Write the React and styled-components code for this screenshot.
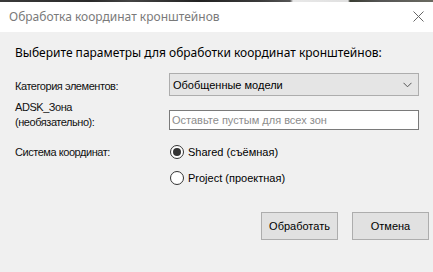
import React from "react";
import styled, { createGlobalStyle } from "styled-components";

const Global = createGlobalStyle`
  html, body { margin: 0; padding: 0; background: #f0f0f0; }
  body { width: 433px; height: 272px; overflow: hidden; }
  * { box-sizing: border-box; }
`;

const Window = styled.div`
  width: 433px;
  height: 272px;
  display: flex;
  flex-direction: column;
  background: #f0f0f0;
`;

const DesktopStrip = styled.div`
  height: 2px;
  flex: none;
  background: linear-gradient(
    to right,
    #3a3a3a 0px, #2a2a2a 90px, #444 130px, #222 200px, #3b3b3b 260px,
    #555 290px, #e8e8e8 293px, #e0e0e0 348px, #3a3d33 350px, #555 380px, #6a6a60 433px
  );
`;

const TitleBar = styled.div`
  height: 30px;
  flex: none;
  background: #ffffff;
  display: flex;
  align-items: center;
  justify-content: space-between;
  padding: 0 0 2px 9px;
`;

const TitleText = styled.span`
  font-family: "Noto Sans", sans-serif;
  font-size: 12px;
  color: #7a7a7a;
`;

const CloseButton = styled.div`
  width: 30px;
  height: 30px;
  display: flex;
  align-items: center;
  justify-content: center;
`;

const Body = styled.div`
  flex: 1;
  padding: 13px 0 0 15px;
  font-family: "Liberation Sans", Arial, sans-serif;
  font-size: 11px;
  color: #000;
`;

const Heading = styled.div`
  font-family: "Noto Sans", sans-serif;
  font-size: 12px;
  line-height: 16px;
  height: 16px;
`;

const Row = styled.div`
  display: flex;
  align-items: ${(p) => p.$align || "center"};
  margin-top: ${(p) => p.$top}px;
`;

const Label = styled.div`
  width: 154px;
  flex: none;
  letter-spacing: -0.45px;
  color: #111;
  line-height: ${(p) => p.$lh || 14}px;
  padding-top: ${(p) => p.$pt || 0}px;
`;

const Combo = styled.div`
  width: 250px;
  height: 23px;
  background: #e5e5e5;
  border: 1px solid #adadad;
  display: flex;
  align-items: center;
  justify-content: space-between;
  padding: 1px 6px 0 3px;
`;

const TextBox = styled.div`
  width: 250px;
  height: 20px;
  background: #fff;
  border: 1px solid #7a7a7a;
  display: flex;
  align-items: center;
  padding: 0 2px;
  margin-top: ${(p) => p.$top || 0}px;
  color: #8c8c8c;
`;

const RadioGroup = styled.div`
  display: flex;
  flex-direction: column;
  gap: 10px;
`;

const RadioItem = styled.div`
  display: flex;
  align-items: center;
  height: 16px;
  gap: 4px;
`;

const RadioCircle = styled.span`
  width: 14px;
  height: 14px;
  border-radius: 50%;
  border: 1px solid #333;
  background: #fff;
  display: flex;
  align-items: center;
  justify-content: center;
  margin-left: 1px;
  &::after {
    content: "";
    display: ${(p) => (p.$checked ? "block" : "none")};
    width: 8px;
    height: 8px;
    border-radius: 50%;
    background: #333;
  }
`;

const ButtonBar = styled.div`
  display: flex;
  justify-content: flex-end;
  gap: 14px;
  margin-top: 26px;
  padding-right: 4px;
`;

const Button = styled.div`
  width: 77px;
  height: 28px;
  background: #e1e1e1;
  border: 1px solid #adadad;
  display: flex;
  align-items: center;
  justify-content: center;
  font-size: 11px;
`;

const Chevron = () => (
  <svg width="9" height="6" viewBox="0 0 9 6">
    <path d="M0.5 0.8 L4.5 4.8 L8.5 0.8" fill="none" stroke="#555" strokeWidth="1" />
  </svg>
);

const CloseIcon = () => (
  <svg width="11" height="11" viewBox="0 0 11 11">
    <path d="M0.5 0.5 L10.5 10.5 M10.5 0.5 L0.5 10.5" stroke="#666" strokeWidth="1" />
  </svg>
);

export default function App() {
  return (
    <>
      <Global />
      <Window>
        <DesktopStrip />
        <TitleBar>
          <TitleText>Обработка координат кронштейнов</TitleText>
          <CloseButton>
            <CloseIcon />
          </CloseButton>
        </TitleBar>
        <Body>
          <Heading>Выберите параметры для обработки координат кронштейнов:</Heading>
          <Row $top={12}>
            <Label $pt={3}>Категория элементов:</Label>
            <Combo>
              <span>Обобщенные модели</span>
              <Chevron />
            </Combo>
          </Row>
          <Row $top={4} $align="flex-start">
            <Label $lh={15}>
              ADSK_Зона
              <br />
              (необязательно):
            </Label>
            <TextBox $top={10}>Оставьте пустым для всех зон</TextBox>
          </Row>
          <Row $top={14} $align="flex-start">
            <Label $lh={16}>Система координат:</Label>
            <RadioGroup>
              <RadioItem>
                <RadioCircle $checked />
                <span>Shared (съёмная)</span>
              </RadioItem>
              <RadioItem>
                <RadioCircle />
                <span>Project (проектная)</span>
              </RadioItem>
            </RadioGroup>
          </Row>
          <ButtonBar>
            <Button>Обработать</Button>
            <Button>Отмена</Button>
          </ButtonBar>
        </Body>
      </Window>
    </>
  );
}
